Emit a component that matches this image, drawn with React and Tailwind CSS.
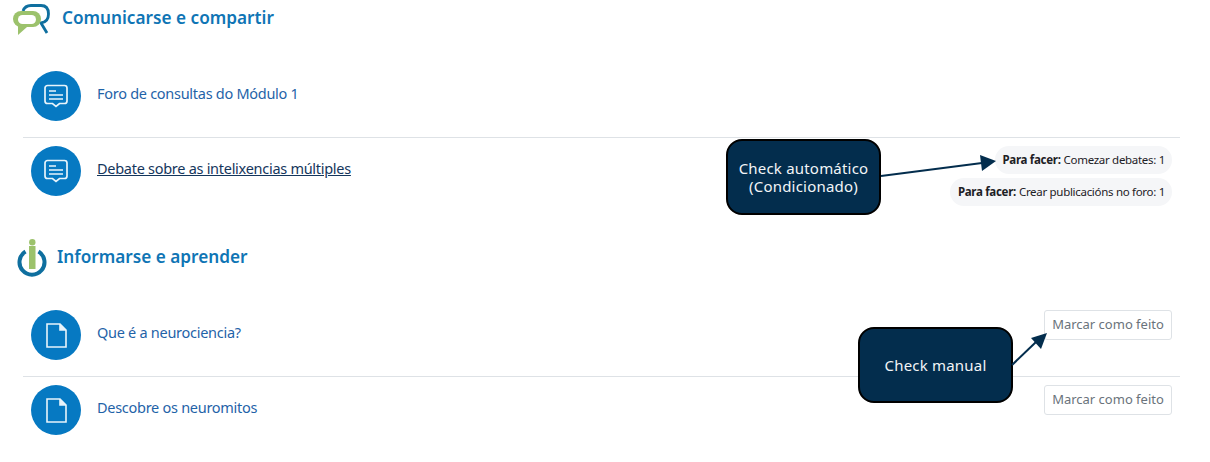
const fontStack = { fontFamily: '"Noto Sans", "Open Sans", sans-serif' };

function ForumIcon() {
  return (
    <svg width="26" height="26" viewBox="0 0 26 26" fill="none" stroke="#e8f4fb" strokeWidth="1.7">
      <path d="M4.5 2.5h17a2.5 2.5 0 0 1 2.5 2.5v13a2.5 2.5 0 0 1-2.5 2.5h-5L13 23.5l-3.5-3h-5A2.5 2.5 0 0 1 2 18V5a2.5 2.5 0 0 1 2.5-2.5z" />
      <path d="M6 8h7M6 12h14M6 16h14" strokeWidth="1.6" />
    </svg>
  );
}

function PageIcon() {
  return (
    <svg width="21" height="25" viewBox="0 0 21 25" fill="none" stroke="#e8f4fb" strokeWidth="1.6">
      <path d="M1 1h13l6 6v17H1z" />
      <path d="M14 1v6h6" fill="#e8f4fb" />
    </svg>
  );
}

function ChatLogo() {
  return (
    <svg width="38" height="33" viewBox="0 0 38 33" className="shrink-0">
      <path d="M10 7Q12 1.5 18 1.5H28Q35.5 1.5 35.5 10Q35.5 18 28 19L34 29" fill="none" stroke="#0f6f9f" strokeWidth="2.8" />
      <rect x="0" y="7" width="28" height="16" rx="8" fill="#9cc26c" />
      <path d="M5 20V31L14 23Z" fill="#9cc26c" />
      <rect x="5" y="11" width="18" height="9" rx="4.5" fill="#fff" />
    </svg>
  );
}

function InfoLogo() {
  return (
    <svg width="30" height="38" viewBox="0 0 30 38" className="shrink-0">
      <path d="M8.5 12.5a12.5 12.5 0 1 0 13 0" fill="none" stroke="#0f6f9f" strokeWidth="4" />
      <circle cx="15.3" cy="3.2" r="3.2" fill="#9cc26c" />
      <rect x="12" y="7" width="6.5" height="23" fill="#9cc26c" />
    </svg>
  );
}

function ActivityRow({ icon, title, underlined, last, children }) {
  return (
    <div className={`flex items-start pt-2 pb-4 pl-2 pr-2 ${last ? '' : 'border-b border-[#dee2e6]'}`}>
      <div className="flex h-[50px] w-[50px] shrink-0 items-center justify-center rounded-full bg-[#0679c2]">
        {icon}
      </div>
      <a className={`ml-4 mt-3 text-[14.5px] leading-[20px] tracking-[-0.28px] ${underlined ? 'text-[#14365c] underline' : 'text-[#1f63a8]'}`}>
        {title}
      </a>
      <div className="ml-auto flex flex-col items-end gap-1">{children}</div>
    </div>
  );
}

function TodoBadge({ label }) {
  return (
    <div className="flex h-7 items-center rounded-full bg-[#f5f6f8] pl-2 pr-[7px] text-[11.5px] tracking-[-0.3px] text-[#1d2125]">
      <b className="mr-[3px] font-bold">Para facer:</b>
      {label}
    </div>
  );
}

function DoneButton() {
  return (
    <button className="h-[30px] w-32 rounded-[3px] border border-[#dee2e6] bg-white text-[13px] text-[#6a737b]">
      Marcar como feito
    </button>
  );
}

function Callout({ className, children }) {
  return (
    <div className={`absolute flex h-[76px] w-[155px] items-center justify-center rounded-[16px] border-2 border-black bg-[#032d4d] text-center text-[15px] leading-[18px] tracking-[0.2px] text-[#f2f5f7] ${className}`}>
      {children}
    </div>
  );
}

export default function App() {
  return (
    <div className="relative h-[462px] w-[1210px] overflow-hidden bg-white" style={fontStack}>
      {/* Comunicarse e compartir */}
      <div className="flex h-9 items-center pl-[13px] pt-1">
        <ChatLogo />
        <h3 className="ml-[11px] -mt-[5px] text-[17.2px] font-semibold text-[#0f75b5]">Comunicarse e compartir</h3>
      </div>
      <div className="ml-[23px] mr-[30px] mt-[27px]">
        <ActivityRow icon={<ForumIcon />} title="Foro de consultas do Módulo 1" />
        <ActivityRow icon={<ForumIcon />} title="Debate sobre as intelixencias múltiples" underlined last>
          <TodoBadge label="Comezar debates: 1" />
          <TodoBadge label="Crear publicacións no foro: 1" />
        </ActivityRow>
      </div>

      {/* Informarse e aprender */}
      <div className="mt-[17px] flex h-[38px] items-center pl-[17px]">
        <InfoLogo />
        <h3 className="ml-[10px] -mt-[2px] text-[17.2px] font-semibold text-[#0f75b5]">Informarse e aprender</h3>
      </div>
      <div className="ml-[23px] mr-[30px] mt-[25px]">
        <ActivityRow icon={<PageIcon />} title="Que é a neurociencia?">
          <DoneButton />
        </ActivityRow>
        <ActivityRow icon={<PageIcon />} title="Descobre os neuromitos" last>
          <DoneButton />
        </ActivityRow>
      </div>

      {/* Annotations laid over the page */}
      <Callout className="left-[726px] top-[139px]">
        <span>Check automático<br />(Condicionado)</span>
      </Callout>
      <Callout className="left-[858px] top-[327px]">Check manual</Callout>
      <svg className="absolute left-0 top-0" width="1210" height="462" fill="none">
        <path d="M881 176 L982 163" stroke="#032d4d" strokeWidth="2" />
        <path d="M996 161 L980 155 L982 171 Z" fill="#032d4d" />
        <path d="M1012 365 L1036 342" stroke="#032d4d" strokeWidth="2" />
        <path d="M1047 333 L1031 338 L1041 349 Z" fill="#032d4d" />
      </svg>
    </div>
  );
}
